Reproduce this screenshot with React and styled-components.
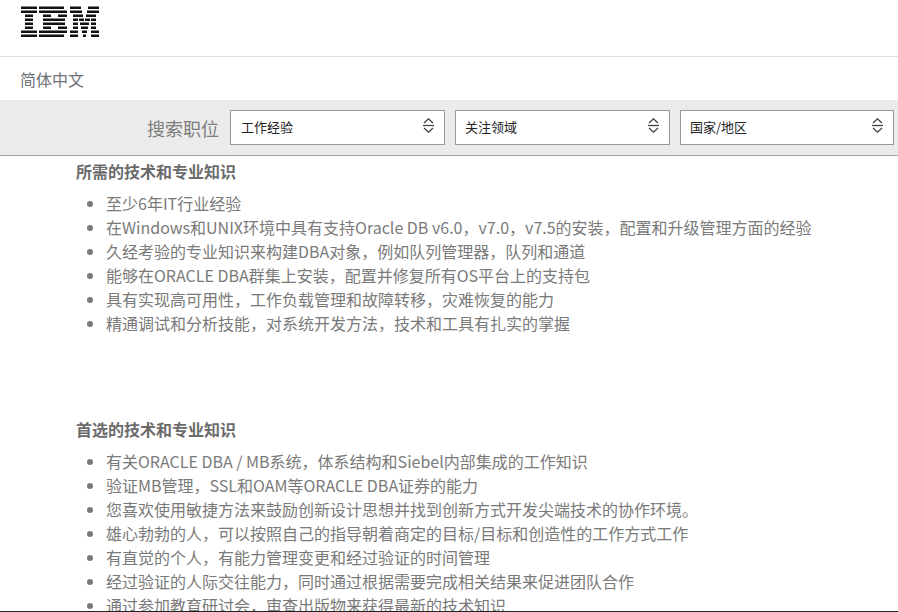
import React from 'react';
import styled, { createGlobalStyle } from 'styled-components';

const Global = createGlobalStyle`
  html, body { margin: 0; padding: 0; background: #fff; overflow: hidden; }
  body { font-family: "Noto Sans CJK SC", "Liberation Sans", sans-serif; }
`;
const Page = styled.div`
  width: 898px; height: 612px; overflow: hidden; position: relative; box-sizing: border-box;
  border-bottom: 1px solid #222;
`;
const Masthead = styled.header`
  height: 57px; box-sizing: border-box; border-bottom: 1px solid #e0e0e0; padding: 6px 0 0 21px;
`;
const Lang = styled.div`
  height: 43px; line-height: 44px; padding-left: 20px; font-size: 16px; color: #6d7277;
`;
const SearchBar = styled.div`
  height: 56px; box-sizing: border-box; background: #ebebeb; border-bottom: 1px solid #a3a3a3;
  display: flex; align-items: flex-start; padding: 10px 4px 0 0; justify-content: flex-end; gap: 10px;
`;
const SearchLabel = styled.div`
  font-size: 18px; color: #7d7d7d; line-height: 36px; margin-right: 1px;
`;
const Select = styled.div`
  width: ${p => p.$width || 215}px; height: 35px; box-sizing: border-box; border: 1px solid #999; background: #fff;
  position: relative; padding-left: ${p => p.$pad || 10}px; font-size: 13px; line-height: 32px; color: #222;
  svg { position: absolute; right: 10px; top: 7px; }
`;
const Content = styled.main`
  padding: 3px 0 0 76px;
`;
const Title = styled.h2`
  margin: 0; font-size: 16px; line-height: 24px; font-weight: 700; color: #6b6b6b;
`;
const List = styled.ul`
  margin: ${p => p.$top}px 0 ${p => p.$bottom}px; padding: 0 0 0 30px; font-size: 16px; line-height: 24px;
  color: #7a7a7a;
`;

const Chevrons = () => (
  <svg width="11" height="15" viewBox="0 0 11 15" fill="none" stroke="#444" strokeWidth="1.3">
    <path d="M1 5 L5.5 0.8 L10 5" />
    <path d="M0 7.5 H11" />
    <path d="M1 10 L5.5 14.2 L10 10" />
  </svg>
);

const ROWS = [
  [[0,16],[18,43],[49,60],[67,78]],
  [[0,16],[18,46],[49,61],[66,78]],
  [[4,12],[22,30],[37,46],[52,62],[65,75]],
  [[4,12],[22,44],[52,57],[58,63],[64,69],[70,75]],
  [[4,12],[22,44],[52,57],[59,68],[70,75]],
  [[4,12],[22,30],[37,46],[52,57],[60,67],[70,75]],
  [[0,16],[18,46],[49,57],[61,66],[70,78]],
  [[0,16],[18,43],[49,57],[62,65],[70,78]],
];
const Logo = () => (
  <svg width="78" height="32" viewBox="0 0 78 32" fill="#111" style={{ display: 'block' }}>
    {ROWS.map((segs, r) => segs.map(([a, b]) => (
      <rect key={`${r}-${a}`} x={a} y={r * 4 + 0.5} width={b - a} height="2.5" />
    )))}
  </svg>
);

const required = [
  '至少6年IT行业经验',
  '在Windows和UNIX环境中具有支持Oracle DB v6.0，v7.0，v7.5的安装，配置和升级管理方面的经验',
  '久经考验的专业知识来构建DBA对象，例如队列管理器，队列和通道',
  '能够在ORACLE DBA群集上安装，配置并修复所有OS平台上的支持包',
  '具有实现高可用性，工作负载管理和故障转移，灾难恢复的能力',
  '精通调试和分析技能，对系统开发方法，技术和工具有扎实的掌握',
];
const preferred = [
  '有关ORACLE DBA / MB系统，体系结构和Siebel内部集成的工作知识',
  '验证MB管理，SSL和OAM等ORACLE DBA证券的能力',
  '您喜欢使用敏捷方法来鼓励创新设计思想并找到创新方式开发尖端技术的协作环境。',
  '雄心勃勃的人，可以按照自己的指导朝着商定的目标/目标和创造性的工作方式工作',
  '有直觉的个人，有能力管理变更和经过验证的时间管理',
  '经过验证的人际交往能力，同时通过根据需要完成相关结果来促进团队合作',
  '通过参加教育研讨会，审查出版物来获得最新的技术知识',
];

export default function App() {
  return (
    <Page>
      <Global />
      <Masthead><Logo /></Masthead>
      <Lang>简体中文</Lang>
      <SearchBar>
        <SearchLabel>搜索职位</SearchLabel>
        <Select>工作经验<Chevrons /></Select>
        <Select $pad={9}>关注领域<Chevrons /></Select>
        <Select $pad={9} $width={214}>国家/地区<Chevrons /></Select>
      </SearchBar>
      <Content>
        <Title>所需的技术和专业知识</Title>
        <List $top={8} $bottom={82}>{required.map(t => <li key={t}>{t}</li>)}</List>
        <Title>首选的技术和专业知识</Title>
        <List $top={8} $bottom={0}>{preferred.map(t => <li key={t}>{t}</li>)}</List>
      </Content>
    </Page>
  );
}
